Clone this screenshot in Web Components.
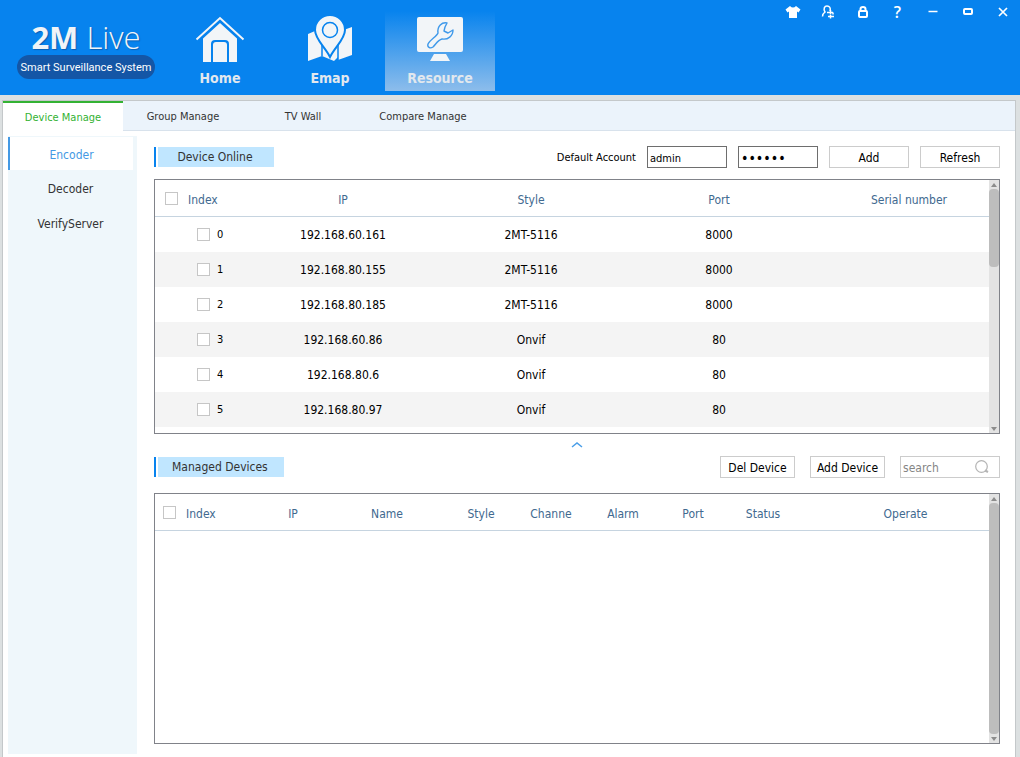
<!DOCTYPE html>
<html lang="en">
<head>
<meta charset="utf-8">
<title>2M Live</title>
<style>
  html, body { margin: 0; height: 100%; }
  body {
    --blue: #0783ee;
    --line: #808289;
    --soft: #cccccc;
    --head: #41698f;
    background: #dce0e1;
    color: #000;
    font-family: "DejaVu Sans Condensed", "DejaVu Sans", sans-serif;
    font-size: 12px;
    line-height: 16px;
  }
</style>
</head>
<body>
<live-app></live-app>

<script>
const icons = {
  home: `<svg width="50" height="48" viewBox="0 0 50 48">
    <path d="M1.5 24.5L25 3l23.5 21.5" fill="none" stroke="#f2f5f8" stroke-width="2"/>
    <path d="M8 23.5L25 8l17 15.5V47h-8V29q0-4-4-4H20q-4 0-4 4v18H8z" fill="#f2f5f8"/>
    <path d="M18 47V30q0-3 3-3h8q3 0 3 3v17z" fill="#f2f5f8"/></svg>`,
  emap: `<svg width="50" height="48" viewBox="0 0 50 48">
    <path d="M3 19l14-6v28L3 46zM17 29h16v13l-4 4-12-5zM33 17l14-5v28l-14 5z" fill="#f2f5f8"/>
    <path d="M17 30v11M33 30v15" stroke="#0783ee" stroke-width="1.5"/>
    <path d="M25 42C20 32 10 24 10 15a15 15 0 0 1 30 0C40 24 30 32 25 42z" fill="#f2f5f8" stroke="#0783ee" stroke-width="2"/>
    <circle cx="25" cy="15" r="7.500" fill="none" stroke="#0783ee" stroke-width="1.5"/></svg>`,
  resource: `<svg width="50" height="48" viewBox="0 0 50 48">
    <path d="M4 2h42q2 0 2 2v31q0 2-2 2H4q-2 0-2-2V4q0-2 2-2zM19 39h12l4 7H15z" fill="#f2f5f8"/>
    <path d="M32 8c-5-1-10 3-9 10-1 3-8 7-10 11-1 3 2 5 5 3 3-3 5-7 9-8 6 1 11-3 11-9l-5 3-4-2 1-4z" fill="none" stroke="#3f99ea" stroke-width="1.4" stroke-linejoin="round"/></svg>`,
  skin: `<svg width="16" height="14" viewBox="0 0 16 14"><path d="M5 1L.5 4.500l2 3L4 6.500V13h8V6.500l1.500 1 2-3L11 1Q8 4 5 1z" fill="#fff"/></svg>`,
  user: `<svg width="14" height="14" viewBox="0 0 14 14" fill="none" stroke="#fff" stroke-width="1.5">
    <path d="M1.500 11.500C1.500 9 2.500 8 4 7 2 4 3.500 1 6 1s4 2 3 5"/>
    <path d="M6 7.500h6M9.500 5v4M7 11.500h6M9.500 9.500v4M12 7.500v2"/></svg>`,
  lock: `<svg width="14" height="14" viewBox="0 0 14 14" fill="none" stroke="#fff" stroke-width="2">
    <rect x="3" y="6" width="8" height="6" rx="1"/><path d="M4.500 6V4q0-2 2.500-2t2.500 2v2"/></svg>`,
  min: `<svg width="14" height="14" viewBox="0 0 14 14"><path d="M2.500 6.500h9" stroke="#fff" stroke-width="1.5"/></svg>`,
  max: `<svg width="14" height="14" viewBox="0 0 14 14"><rect x="3" y="4" width="8" height="5" rx="1" fill="none" stroke="#fff" stroke-width="2"/></svg>`,
  close: `<svg width="14" height="14" viewBox="0 0 14 14"><path d="M3 3l8 8M11 3l-8 8" stroke="#fff" stroke-width="1.7"/></svg>`
};

const devices = [
  ['192.168.60.161', '2MT-5116', '8000'],
  ['192.168.80.155', '2MT-5116', '8000'],
  ['192.168.80.185', '2MT-5116', '8000'],
  ['192.168.60.86', 'Onvif', '80'],
  ['192.168.80.6', 'Onvif', '80'],
  ['192.168.80.97', 'Onvif', '80']
];

class Base extends HTMLElement {
  constructor() {
    super();
    this.attachShadow({ mode: 'open' });
  }

  connectedCallback() {
    this.shadowRoot.innerHTML = this.render();
  }
}

class LiveLogo extends Base {
  render() {
    return `
      <style>
        :host { display: block; width: 138px; text-align: center; }
        .name {
          font: 300 31px/36px "Open Sans", sans-serif;
          color: #f0f4f8;
          text-shadow: 1px 1px 1px #0a5fb4;
        }
        b { font-weight: 700; }
        .tag {
          border-radius: 12px;
          background: #1456a6;
          color: #fff;
          font: 11px/24px Roboto, "Liberation Sans", sans-serif;
          padding-top: 1px;
          height: 23px;
        }
      </style>
      <div class="name"><b>2M</b> Live</div>
      <div class="tag">Smart Surveillance System</div>
    `;
  }
}

class NavTile extends Base {
  render() {
    return `
      <style>
        :host { display: block; width: 110px; }
        a {
          display: flex;
          flex-direction: column;
          align-items: center;
          gap: 6px;
          padding: 4px 0;
          color: #e2e8ee;
          font-size: 14px;
          line-height: 18px;
          font-weight: bold;
          text-decoration: none;
        }
        :host([active]) a { background: linear-gradient(#0783ee, #8dbdeb); }
        svg { display: block; }
      </style>
      <a href="#">${icons[this.getAttribute('icon')]}<slot></slot></a>
    `;
  }
}

class WindowButtons extends Base {
  render() {
    const names = ['skin', 'user', 'lock', 'help', 'min', 'max', 'close'];
    return `
      <style>
        :host { display: flex; }
        button {
          display: flex;
          align-items: center;
          justify-content: center;
          width: 35px;
          height: 24px;
          padding: 0;
          border: 0;
          background: none;
          color: #fff;
          font: 600 16px "Open Sans", sans-serif;
        }
      </style>
      ${names.map(n => `<button aria-label="${n}">${icons[n] || '?'}</button>`).join('')}
    `;
  }
}

class AppHeader extends Base {
  render() {
    return `
      <style>
        :host {
          display: flex;
          align-items: flex-start;
          background: var(--blue);
          height: 95px;
        }
        live-logo { margin: 19px 10px 0 17px; }
        nav { display: flex; padding-top: 11px; }
        window-buttons { margin-left: auto; }
      </style>
      <live-logo></live-logo>
      <nav>
        <nav-tile icon="home">Home</nav-tile>
        <nav-tile icon="emap">Emap</nav-tile>
        <nav-tile icon="resource" active>Resource</nav-tile>
      </nav>
      <window-buttons></window-buttons>
    `;
  }
}

class TabStrip extends Base {
  render() {
    return `
      <style>
        :host { display: flex; background: #ebf3fb; }
        a {
          width: 120px;
          box-sizing: border-box;
          height: 30px;
          border-bottom: 1px solid #d8e2ec;
          color: #333;
          font-size: 11px;
          line-height: 31px;
          text-align: center;
          text-decoration: none;
        }
        .on {
          background: #fff;
          border-top: 2px solid #33b233;
          border-bottom: 0;
          color: #33b233;
          line-height: 30px;
        }
        .rest { flex: 1; border-bottom: 1px solid #d8e2ec; }
      </style>
      <a class="on" href="#">Device Manage</a>
      <a href="#">Group Manage</a>
      <a href="#">TV Wall</a>
      <a href="#">Compare Manage</a>
      <span class="rest"></span>
    `;
  }
}

class SideMenu extends Base {
  render() {
    return `
      <style>
        :host { display: block; width: 129px; background: #eff7fb; }
        a {
          display: block;
          margin-right: 4px;
          height: 35px;
          line-height: 37px;
          color: #333;
          text-align: center;
          text-decoration: none;
        }
        .on {
          border-left: 2px solid #4499e4;
          background: #fff;
          color: #4499e4;
          height: 33px;
          margin: 1px 4px 1px 0;
        }
      </style>
      <a class="on" href="#">Encoder</a>
      <a href="#">Decoder</a>
      <a href="#">VerifyServer</a>
    `;
  }
}

class SectionBar extends Base {
  render() {
    return `
      <style>
        :host { display: flex; align-items: center; height: 22px; }
        h2 {
          margin: 0 auto 0 0;
          box-sizing: border-box;
          height: 20px;
          padding: 0 16px;
          min-width: 120px;
          border-left: 2px solid var(--blue);
          box-shadow: inset 2px 0 #fff;
          background: #c0e6ff;
          color: #333;
          font-size: 12px;
          line-height: 20px;
          font-weight: normal;
          text-align: center;
        }
        .tools { display: flex; align-items: center; gap: var(--gap, 11px); }
      </style>
      <h2>${this.getAttribute('label')}</h2>
      <div class="tools"><slot></slot></div>
    `;
  }
}

class PlainButton extends Base {
  render() {
    return `
      <style>
        :host { display: block; }
        button {
          display: block;
          width: var(--w, 80px);
          height: 22px;
          padding: 1px 0 0;
          border: 1px solid var(--soft);
          background: #fff;
          color: #000;
          font: inherit;
          white-space: nowrap;
        }
      </style>
      <button><slot></slot></button>
    `;
  }
}

class AccountFields extends Base {
  render() {
    return `
      <style>
        :host { display: flex; align-items: center; gap: 11px; }
        label { font-size: 11px; padding-top: 2px; }
        input {
          box-sizing: border-box;
          width: 80px;
          height: 22px;
          margin: 0;
          padding: 2px 2px 0;
          border: 1px solid #6e6e6e;
          background: #fff;
          color: #000;
          font: inherit;
          font-size: 11px;
        }
        input[type=password] { font-size: 14px; }
      </style>
      <label for="user">Default Account</label>
      <input id="user" value="admin">
      <input type="password" value="123456" aria-label="Password">
    `;
  }
}

class SearchBox extends Base {
  render() {
    return `
      <style>
        :host {
          display: flex;
          align-items: center;
          box-sizing: border-box;
          width: 100px;
          height: 22px;
          padding: 0 10px 0 2px;
          border: 1px solid var(--soft);
        }
        input {
          flex: 1;
          min-width: 0;
          padding: 1px 0 0;
          border: 0;
          outline: 0;
          background: none;
          font: inherit;
        }
        input::placeholder { color: #858585; }
      </style>
      <input type="search" placeholder="search" aria-label="search">
      <svg width="14" height="14" viewBox="0 0 14 14" fill="none" stroke="#b4b4b4" stroke-width="1.2">
        <circle cx="6.500" cy="6.500" r="5.800"/><path d="M10 10.500l3 1.500" stroke-width="2"/>
      </svg>
    `;
  }
}

class ScrollTrack extends Base {
  render() {
    return `
      <style>
        :host { display: flex; flex-direction: column; width: 10px; background: #e3e3e3; }
        svg { display: block; flex: none; }
        .thumb {
          border-radius: 4px;
          background: #bdbdbd;
          flex: 0 0 78px;
        }
        :host([full]) .thumb { flex: 1; }
        .gap { flex: 1; }
        :host([full]) .gap { display: none; }
      </style>
      <svg width="10" height="9"><path d="M2 7l3-4 3 4z" fill="#8c8c8c"/></svg>
      <div class="thumb"></div>
      <div class="gap"></div>
      <svg width="10" height="9"><path d="M2 3l3 4 3-4z" fill="#8c8c8c"/></svg>
    `;
  }
}

const tableStyle = `
  :host {
    display: flex;
    box-sizing: border-box;
    border: 1px solid var(--line);
    background: #fff;
    overflow: hidden;
  }
  .view { flex: 1; min-width: 0; overflow: hidden; }
  table { width: 100%; table-layout: fixed; border-collapse: separate; border-spacing: 0; }
  th, td { padding: 0; text-align: center; font-weight: normal; white-space: nowrap; }
  th {
    box-sizing: border-box;
    height: 37px;
    padding-top: 3px;
    border-bottom: 1px solid #c6d4e0;
    color: var(--head);
  }
  td { height: 35px; }
  tr:nth-child(even) td { background: #f4f4f4; }
  label { display: flex; align-items: center; gap: 10px; }
  input {
    appearance: none;
    box-sizing: border-box;
    width: 13px;
    height: 13px;
    margin: 0;
    border: 1px solid #c6c6c6;
    background: #fff;
  }
  th input { margin-bottom: 2px; }
`;

class OnlineTable extends Base {
  render() {
    const rows = devices.map((d, i) => `
      <tr>
        <td><label><input type="checkbox">${i}</label></td>
        ${d.map(v => `<td>${v}</td>`).join('')}
        <td></td>
      </tr>`).join('');
    return `
      <style>
        ${tableStyle}
        :host { height: 255px; }
        th label { padding-left: 10px; }
        td label { padding-left: 42px; gap: 7px; font-size: 11px; }
        th:last-child { padding-left: 16px; }
      </style>
      <div class="view"><table>
        <colgroup><col width="94"><col width="188"><col width="188"><col width="188"><col></colgroup>
        <thead><tr>
          <th><label><input type="checkbox">Index</label></th>
          <th>IP</th><th>Style</th><th>Port</th><th>Serial number</th>
        </tr></thead>
        <tbody>${rows}</tbody>
      </table></div>
      <scroll-track></scroll-track>
    `;
  }
}

class ManagedTable extends Base {
  render() {
    return `
      <style>
        ${tableStyle}
        th label { padding-left: 8px; }
        th:last-child { padding-left: 10px; }
      </style>
      <div class="view"><table>
        <colgroup>
          <col width="91"><col width="94"><col width="94"><col width="94"><col width="46">
          <col width="98"><col width="42"><col width="98"><col>
        </colgroup>
        <thead><tr>
          <th><label><input type="checkbox">Index</label></th>
          <th>IP</th><th>Name</th><th>Style</th><th>Channe</th>
          <th>Alarm</th><th>Port</th><th>Status</th><th>Operate</th>
        </tr></thead>
      </table></div>
      <scroll-track full></scroll-track>
    `;
  }
}

class LiveApp extends Base {
  render() {
    return `
      <style>
        :host { display: flex; flex-direction: column; min-height: 100vh; }
        .panel {
          flex: 1;
          display: flex;
          flex-direction: column;
          margin: 5px 4px 0 2px;
          border: 1px solid #c4c8ca;
          border-bottom: 0;
          background: #fff;
        }
        .body { flex: 1; display: flex; gap: 17px; padding: 5px 15px 3px 5px; }
        main { flex: 1; min-width: 0; display: flex; flex-direction: column; padding: 10px 0; }
        online-table { margin-top: 11px; }
        .fold {
          display: flex;
          justify-content: center;
          height: 22px;
          padding: 0;
          border: 0;
          background: none;
        }
        .fold svg { margin-top: 7px; }
        .managed { --gap: 15px; --w: 75px; }
        managed-table { flex: 1; margin-top: 15px; }
      </style>
      <app-header></app-header>
      <div class="panel">
        <tab-strip></tab-strip>
        <div class="body">
          <side-menu></side-menu>
          <main>
            <section-bar label="Device Online">
              <account-fields></account-fields>
              <plain-button>Add</plain-button>
              <plain-button>Refresh</plain-button>
            </section-bar>
            <online-table></online-table>
            <button class="fold" aria-label="Collapse">
              <svg width="12" height="7"><path d="M1 6l5-4 5 4" fill="none" stroke="#4a9ee8" stroke-width="1.5"/></svg>
            </button>
            <section-bar class="managed" label="Managed Devices">
              <plain-button>Del Device</plain-button>
              <plain-button>Add Device</plain-button>
              <search-box></search-box>
            </section-bar>
            <managed-table></managed-table>
          </main>
        </div>
      </div>
    `;
  }
}

customElements.define('live-logo', LiveLogo);
customElements.define('nav-tile', NavTile);
customElements.define('window-buttons', WindowButtons);
customElements.define('app-header', AppHeader);
customElements.define('tab-strip', TabStrip);
customElements.define('side-menu', SideMenu);
customElements.define('section-bar', SectionBar);
customElements.define('plain-button', PlainButton);
customElements.define('account-fields', AccountFields);
customElements.define('search-box', SearchBox);
customElements.define('scroll-track', ScrollTrack);
customElements.define('online-table', OnlineTable);
customElements.define('managed-table', ManagedTable);
customElements.define('live-app', LiveApp);
</script>
</body>
</html>
